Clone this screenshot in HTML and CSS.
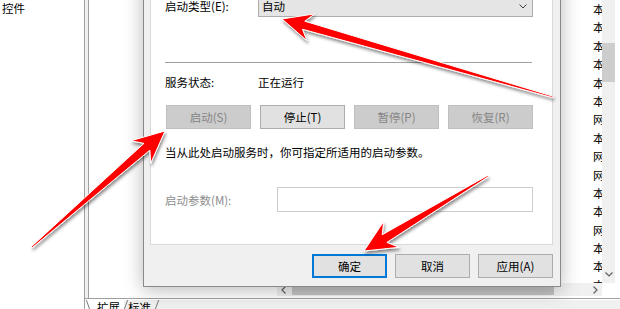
FILE: index.html
```html
<!DOCTYPE html>
<html lang="zh-CN">
<head>
<meta charset="utf-8">
<title>服务属性</title>
<link rel="stylesheet" href="styles.css">
</head>
<body>
<div class="app">
  <div class="tree"><span class="tree-item">控件</span></div>
  <div class="splitter"></div>
  <div class="main">
    <div class="content">
      <div class="desc"></div>
      <div class="listview">
        <div class="list">
          <div class="row">本地服务</div>
          <div class="row">本地服务</div>
          <div class="row">本地系统</div>
          <div class="row">本地系统</div>
          <div class="row">本地系统</div>
          <div class="row">本地服务</div>
          <div class="row">网络服务</div>
          <div class="row">本地系统</div>
          <div class="row">网络服务</div>
          <div class="row">网络服务</div>
          <div class="row">本地系统</div>
          <div class="row">本地服务</div>
          <div class="row">网络服务</div>
          <div class="row">本地系统</div>
          <div class="row">本地系统</div>
          <div class="row">本地系统</div>
        </div>
        <div class="vscroll">
          <div class="vthumb"></div>
          <svg class="vdown" width="8" height="5" viewBox="0 0 8 5"><polyline points="0.5,0.5 4,4 7.5,0.5" fill="none" stroke="#606060" stroke-width="1.2"/></svg>
        </div>
      </div>
      <div class="edge"></div>
    </div>
    <div class="hbar">
      <div class="hdesc"></div>
      <div class="hscroll">
        <div class="harrow"><svg width="5" height="8" viewBox="0 0 5 8"><polyline points="4.5,0.5 1,4 4.5,7.5" fill="none" stroke="#606060" stroke-width="1.2"/></svg></div>
        <div class="hthumb"></div>
        <div class="htrack"></div>
        <div class="harrow"><svg width="5" height="8" viewBox="0 0 5 8"><polyline points="0.5,0.5 4,4 0.5,7.5" fill="none" stroke="#606060" stroke-width="1.2"/></svg></div>
      </div>
      <div class="corner"></div>
      <div class="edge"></div>
    </div>
    <div class="hgap"></div>
    <div class="tabs">
      <div class="tab tab-first">扩展</div>
      <div class="tab">标准</div>
    </div>
  </div>

  <div class="dialog">
    <div class="panel">
      <div class="field-row">
        <span class="field-label">启动类型(E):</span>
        <div class="combo">
          <span>自动</span>
          <svg width="8" height="5" viewBox="0 0 8 5"><polyline points="0.5,0.5 4,4 7.5,0.5" fill="none" stroke="#404040" stroke-width="1"/></svg>
        </div>
      </div>
      <div class="separator"></div>
      <div class="status-row">
        <span class="field-label">服务状态:</span>
        <span>正在运行</span>
      </div>
      <div class="svc-buttons">
        <div class="btn btn-disabled">启动(S)</div>
        <div class="btn">停止(T)</div>
        <div class="btn btn-disabled">暂停(P)</div>
        <div class="btn btn-disabled">恢复(R)</div>
      </div>
      <div class="hint">当从此处启动服务时，你可指定所适用的启动参数。</div>
      <div class="param-row">
        <span class="param-label">启动参数(M):</span>
        <div class="param-input"></div>
      </div>
    </div>
    <div class="dlg-buttons">
      <div class="btn dlg-btn btn-default">确定</div>
      <div class="btn dlg-btn">取消</div>
      <div class="btn dlg-btn">应用(A)</div>
    </div>
  </div>

  <svg class="arrows" width="620" height="309" viewBox="0 0 620 309">
    <defs>
      <filter id="sh" x="-10%" y="-10%" width="120%" height="130%">
        <feDropShadow dx="1" dy="2.5" stdDeviation="1.6" flood-color="#000" flood-opacity="0.45"/>
      </filter>
    </defs>
    <g filter="url(#sh)" fill="#ff0000" stroke="#ffffff" stroke-width="1" stroke-linejoin="round">
      <polygon points="552.81,97.67 302.46,29.26 306.96,40.75 282,19 314.70,13.85 304.78,21.18 553.19,96.33"/>
      <polygon points="32.46,247.53 149.87,150.17 150.74,163.33 165,131 131.02,140.73 143.95,143.39 31.54,246.47"/>
      <polygon points="487.64,175.40 382.21,234.73 383.62,221.60 364,251 399.14,247.28 386.87,242.43 488.36,176.60"/>
    </g>
  </svg>
</div>
</body>
</html>
```

FILE: styles.css
```css
* { box-sizing: border-box; }
html, body { margin: 0; padding: 0; }
body {
  width: 620px;
  height: 309px;
  overflow: hidden;
  background: #fff;
  font-family: "Microsoft YaHei UI", "Noto Sans CJK SC", "Noto Sans", sans-serif;
  font-size: 11.5px;
  color: #000;
}
.app {
  position: relative;
  width: 620px;
  height: 309px;
  display: flex;
  overflow: hidden;
  background: #fff;
}
.tree {
  width: 84px;
  flex: none;
  padding: 0 2px;
  line-height: 16px;
}
.splitter {
  width: 5px;
  flex: none;
  background: #f0f0f0;
  border-left: 1px solid #a0a0a0;
  border-right: 1px solid #a0a0a0;
}
.main {
  flex: 1;
  min-width: 0;
  display: flex;
  flex-direction: column;
}
.content {
  height: 283px;
  display: flex;
}
.desc { width: 188px; flex: none; background: #fff; }
.listview { flex: 1; min-width: 0; display: flex; }
.list {
  flex: 1;
  min-width: 0;
  overflow: hidden;
  padding-left: 316px;
  background: #fff;
}
.row {
  height: 18.4px;
  line-height: 18.4px;
  white-space: nowrap;
}
.vscroll {
  width: 13px;
  flex: none;
  background: #f0f0f0;
  display: flex;
  flex-direction: column;
  align-items: center;
}
.vthumb {
  margin-top: 43px;
  width: 13px;
  height: 39px;
  background: #cdcdcd;
}
.vdown { margin-top: auto; margin-bottom: 6px; }
.edge { width: 5px; flex: none; background: #fff; }

.hbar { height: 13px; display: flex; }
.hdesc { width: 188px; flex: none; background: #fff; }
.hscroll {
  width: 325px;
  flex: none;
  display: flex;
  align-items: stretch;
  background: #f0f0f0;
}
.harrow {
  width: 13px;
  flex: none;
  display: flex;
  align-items: center;
  justify-content: center;
}
.hthumb {
  width: 262px;
  flex: none;
  margin: 2px 0 1px 2px;
  background: #c4c4c4;
}
.htrack { flex: 1; }
.corner { width: 13px; flex: none; background: #fff; }
.hgap { height: 2px; }

.tabs {
  height: 11px;
  margin-left: -4px;
  display: flex;
  background: #f0f0f0;
  border-top: 1px solid #a0a0a0;
  box-shadow: inset 0 1px 0 #ffffff;
  padding-top: 1px;
  overflow: hidden;
}
.tab {
  position: relative;
  padding: 0 4px;
  line-height: 14px;
  white-space: nowrap;
}
.tab-first { padding-left: 12px; background: #fff; }
.tab::after,
.tab-first::before {
  content: "";
  position: absolute;
  top: 0;
  width: 1px;
  height: 12px;
  background: #7a7a7a;
}
.tab::after { right: -2px; transform: skewX(-20deg); }
.tab-first::before { left: 3px; transform: skewX(20deg); }

/* dialog window */
.dialog {
  position: absolute;
  left: 143px;
  top: -40px;
  width: 418px;
  height: 327px;
  background: #f0f0f0;
  border: 1px solid #8a8a8a;
  padding: 0 7px 8px 6px;
  display: flex;
  flex-direction: column;
  box-shadow: 0 3px 18px rgba(0, 0, 0, 0.28);
}
.panel {
  flex: 1;
  background: #fff;
  border: 1px solid #d9d9d9;
  padding: 33px 0 0 14px;
  display: flex;
  flex-direction: column;
}
.field-row {
  height: 22px;
  display: flex;
  align-items: center;
}
.field-label { width: 93px; flex: none; }
.combo {
  width: 275px;
  height: 22px;
  border: 1px solid #adadad;
  background: #e5e5e5;
  display: flex;
  align-items: center;
  justify-content: space-between;
  padding: 0 5px 0 3px;
}
.separator {
  margin-top: 45px;
  width: 367px;
  height: 1px;
  background: #a0a0a0;
}
.status-row {
  margin-top: 11px;
  height: 16px;
  line-height: 16px;
  display: flex;
}
.svc-buttons {
  margin-top: 15px;
  margin-left: 1px;
  display: flex;
  gap: 9px;
}
.btn {
  width: 85px;
  height: 24px;
  display: flex;
  align-items: center;
  justify-content: center;
  background: #e1e1e1;
  border: 1px solid #adadad;
  color: #000;
}
.btn-disabled {
  background: #cccccc;
  border-color: #bfbfbf;
  color: #858585;
}
.hint {
  margin-top: 15px;
  line-height: 16px;
}
.param-row {
  margin-top: 27px;
  height: 25px;
  display: flex;
  align-items: center;
}
.param-label { width: 112px; flex: none; color: #8d8d8d; }
.param-input {
  width: 256px;
  height: 25px;
  border: 1px solid #cccccc;
  background: #fff;
}
.dlg-buttons {
  margin-top: 9px;
  display: flex;
  justify-content: flex-end;
  gap: 8px;
}
.dlg-btn { width: 75px; }
.btn-default { border: 2px solid #0078d7; }

.arrows {
  position: absolute;
  left: 0;
  top: 0;
  pointer-events: none;
}
```
